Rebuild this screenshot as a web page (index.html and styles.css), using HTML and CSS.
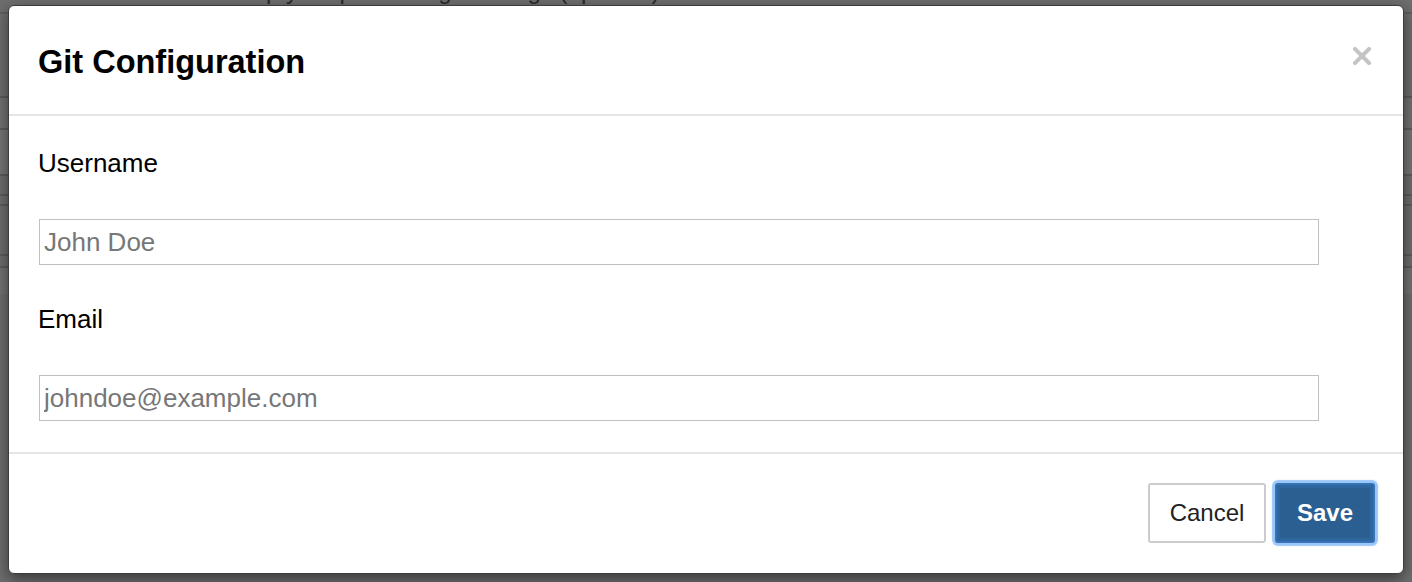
FILE: index.html
```html
<!DOCTYPE html>
<html lang="en">
<head>
    <meta charset="UTF-8">
    <meta name="viewport" content="width=device-width, initial-scale=1.0">
    <title>Git Configuration</title>
    <link rel="stylesheet" href="styles.css">
</head>
<body>

    <div class="page">
        <div class="page-head">
            <span class="page-text">Set up your personal git settings (optional)</span>
        </div>
        <div class="row row-a"></div>
        <div class="row row-b"></div>
        <div class="row row-c"></div>
        <div class="row row-d"></div>
        <div class="row row-e"></div>
        <div class="row row-f"></div>
        <div class="row row-g"></div>
        <div class="row row-h"></div>
    </div>

    <div class="modal">
        <div class="modal-header">
            <h4 class="modal-title">Git Configuration</h4>
            <button type="button" class="close" aria-label="Close">
                <svg width="18" height="18" viewBox="0 0 18 18">
                    <path d="M2 2 L16 16 M16 2 L2 16" stroke="#c4c4c4" stroke-width="4" stroke-linecap="square"/>
                </svg>
            </button>
        </div>

        <form class="modal-body">
            <label for="username">Username</label>
            <input type="text" id="username" placeholder="John Doe">

            <label for="email" class="label-second">Email</label>
            <input type="email" id="email" placeholder="johndoe@example.com">
        </form>

        <div class="modal-footer">
            <button type="button" class="btn btn-default">Cancel</button>
            <button type="button" class="btn btn-primary">Save</button>
        </div>
    </div>

</body>
</html>
```

FILE: styles.css
```css
body {
    font-family: "Liberation Sans", Arial, sans-serif;
    margin: 0px;
    padding: 0px;
    background-color: #6e6e6e;
    overflow: hidden;
}
div.page {
    height: 582px;
    background-color: #6e6e6e;
}
div.page-head {
    height: 12px;
    overflow: hidden;
    border-bottom: 2px solid #5f5f5f;
}
span.page-text {
    display: block;
    margin-top: -22px;
    padding-left: 210px;
    font-size: 24px;
    line-height: 26px;
    color: #2a2a2a;
}
div.row {
    border-bottom: 2px solid #5c5c5c;
}
div.row-a { height: 82px; }
div.row-b { height: 30px; background-color: #727272; }
div.row-c { height: 44px; background-color: #767676; }
div.row-d { height: 18px; }
div.row-e { height: 8px; }
div.row-f { height: 48px; }
div.row-g { height: 10px; }
div.row-h { height: 26px; background-color: #737373; border-bottom: none; }

.modal {
    position: absolute;
    top: 5px;
    left: 8px;
    width: 1394px;
    height: 567px;
    background-color: #fff;
    border: 1px solid #3c3c3c;
    border-radius: 6px;
    box-shadow: 0 5px 15px rgba(0, 0, 0, 0.5);
    display: flex;
    flex-direction: column;
}
.modal-header {
    display: flex;
    justify-content: space-between;
    align-items: flex-start;
    height: 72px;
    padding: 36px 32px 0px 29px;
    border-bottom: 2px solid #e5e5e5;
}
.modal-title {
    margin: 0px;
    font-size: 32.5px;
    line-height: 40px;
    font-weight: bold;
    color: #000;
}
.close {
    margin-top: 5px;
    padding: 0px;
    border: none;
    background: none;
    width: 18px;
    height: 18px;
    cursor: pointer;
}
.close svg {
    display: block;
}
.modal-body {
    display: flex;
    flex-direction: column;
    align-items: flex-start;
    margin: 0px;
    padding: 32px 29px 31px 29px;
    border-bottom: 2px solid #e5e5e5;
}
.modal-body label {
    font-size: 26px;
    line-height: 30px;
    color: #000;
    margin-bottom: 41px;
}
.modal-body label.label-second {
    margin-top: 39px;
}
.modal-body input {
    box-sizing: border-box;
    width: 1280px;
    height: 46px;
    margin: 0px 0px 0px 1px;
    padding: 0px 4px;
    border: 1px solid #c0c0c0;
    border-radius: 0px;
    font-family: "Liberation Sans", Arial, sans-serif;
    font-size: 26px;
    color: #333;
    outline: none;
}
.modal-body input::placeholder {
    color: #777;
}
.modal-footer {
    display: flex;
    justify-content: flex-end;
    gap: 9px;
    padding: 29px 28px 0px 29px;
}
.btn {
    box-sizing: border-box;
    height: 60px;
    border-radius: 3px;
    font-family: "Liberation Sans", Arial, sans-serif;
    font-size: 24px;
    cursor: pointer;
}
.btn-default {
    width: 118px;
    background-color: #fff;
    color: #222;
    border: 2px solid #cccccc;
}
.btn-primary {
    width: 100px;
    background-color: #2b5f91;
    color: #fff;
    font-weight: bold;
    border: 2px solid #3573b6;
    box-shadow: inset 0 0 0 3px #2e67a0, 0 0 1px 3px rgba(120, 180, 245, 0.75);
}
```
